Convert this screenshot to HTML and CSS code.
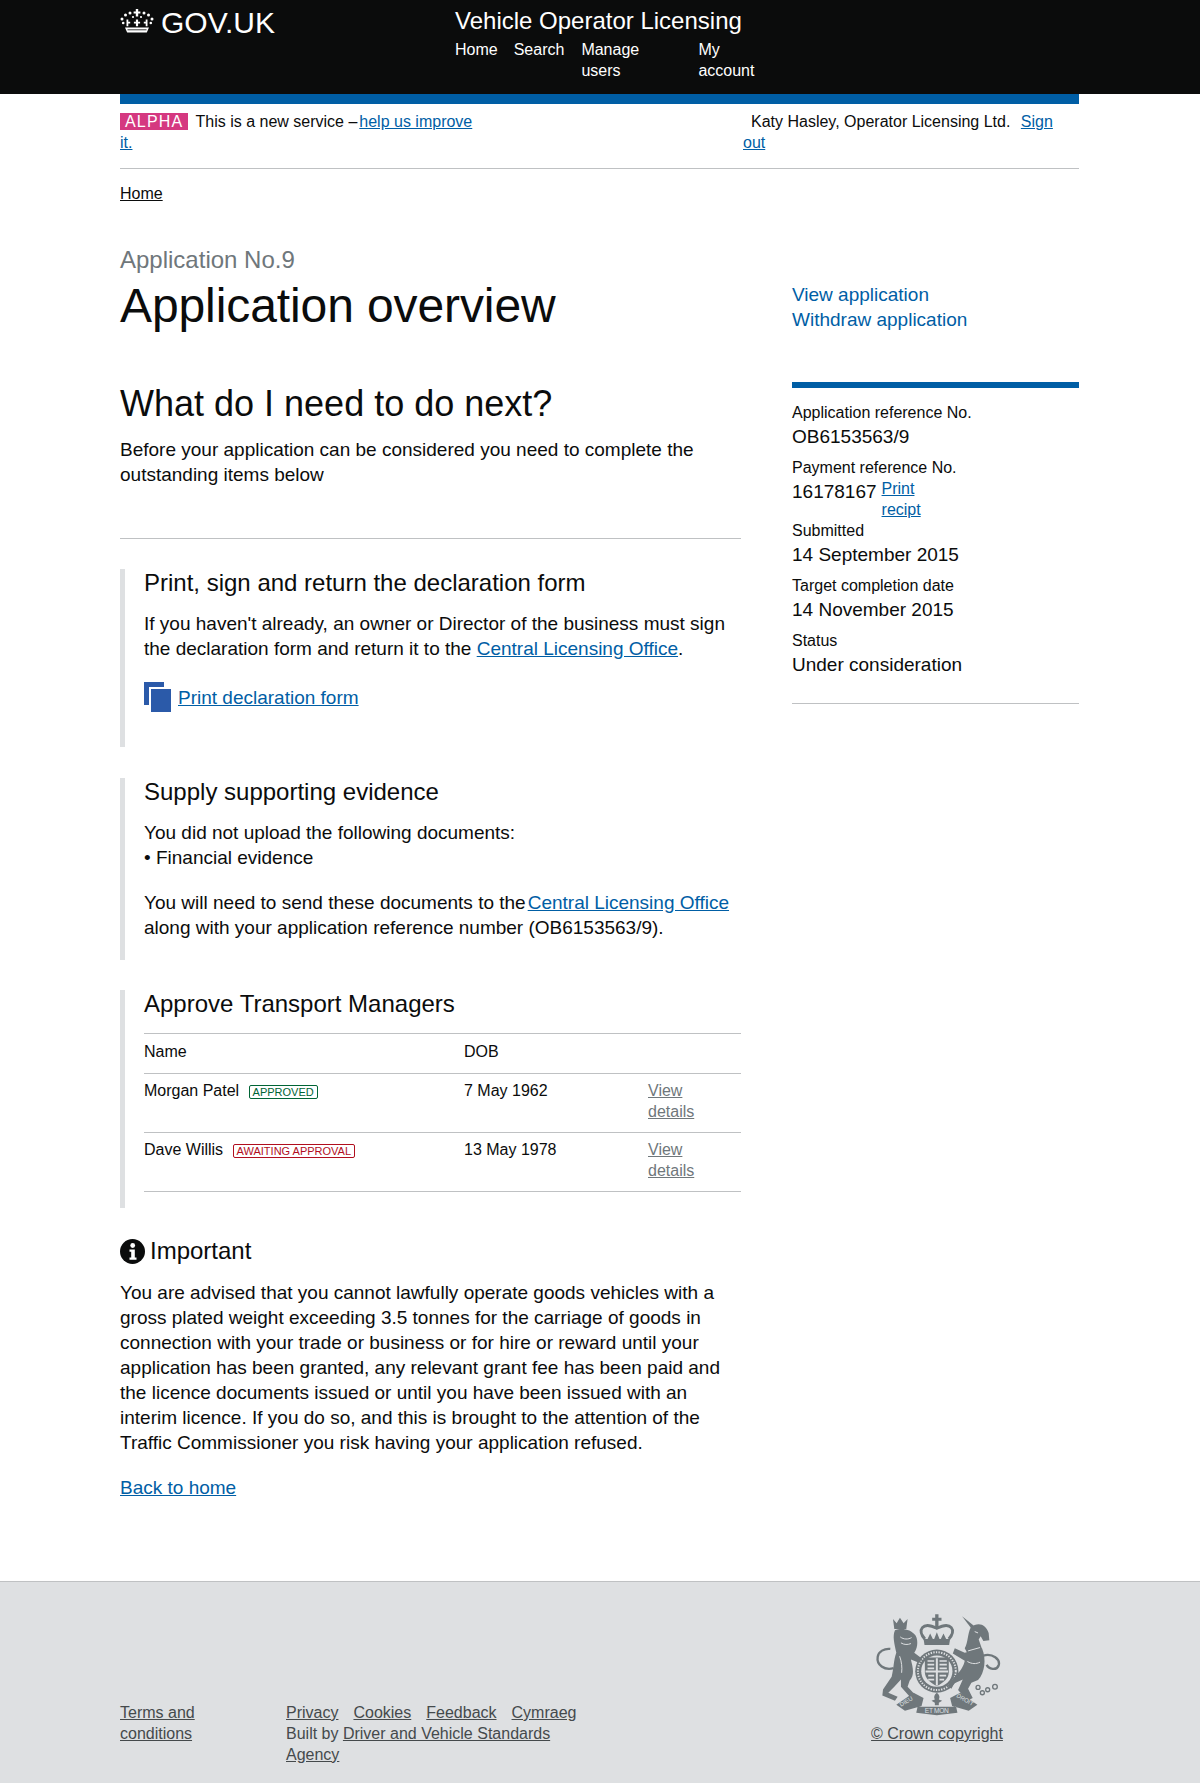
FILE: index.html
```html
<!DOCTYPE html>
<html lang="en">
<head>
    <meta charset="UTF-8">
    <meta name="viewport" content="width=device-width, initial-scale=1.0">
    <title>Application overview</title>
    <link rel="stylesheet" href="styles.css">
</head>
<body>
    <header class="site-header">
        <div class="header-inner">
            <a class="logo" href="#">
                <svg class="logo-crown" viewBox="0 0 34 26" aria-hidden="true">
                    <g fill="#fff">
                        <path d="M15.800 1h2.400v2.400h2.200v2.200h-2.200v3h-2.400v-3h-2.200V3.400h2.200z"/>
                        <circle cx="10" cy="5" r="1.500"/><circle cx="24" cy="5" r="1.500"/>
                        <circle cx="5.500" cy="7" r="1.500"/><circle cx="28.500" cy="7" r="1.500"/>
                        <circle cx="2" cy="11" r="1.500"/><circle cx="32" cy="11" r="1.500"/>
                        <circle cx="13" cy="9" r="1.100"/><circle cx="21" cy="9" r="1.100"/>
                        <circle cx="3.200" cy="15" r="1.300"/><circle cx="30.800" cy="15" r="1.300"/>
                        <path d="M6.500 11.500h1.800v2.200h1.900v1.700H8.300v2.800H6.500zM15.900 11.500h2.200v2.200h2v1.700h-2v2.800h-2.200v-2.800h-2v-1.700h2zM25.700 11.500h1.800v6.700h-1.800v-2.800h-1.900v-1.700h1.900z"/>
                        <path d="M5 19.500h24l-2.200 5H7.200z"/>
                    </g>
                    <path d="M7.500 21.800h19" stroke="#0b0c0c" stroke-width=".8"/>
                </svg>
                <span>GOV.UK</span>
            </a>
            <div class="service">
                <div class="service-name">Vehicle Operator Licensing</div>
                <nav class="main-nav">
                    <a href="#">Home</a>
                    <a href="#">Search</a>
                    <a class="nav-wide" href="#">Manage users</a>
                    <a class="nav-narrow" href="#">My account</a>
                </nav>
            </div>
        </div>
    </header>

    <div class="wrapper">
        <div class="blue-bar"></div>
        <div class="phase-row">
            <p class="phase-text"><strong class="phase-tag">ALPHA</strong>This is a new service –<a class="tight-link" href="#">help us improve it.</a></p>
            <p class="user-text">Katy Hasley, Operator Licensing Ltd. <a class="sign-out" href="#">Sign out</a></p>
        </div>
        <div class="breadcrumbs"><a href="#">Home</a></div>

        <main class="columns">
            <div class="main-col">
                <div class="page-title">
                    <div class="caption">Application No.9</div>
                    <h1>Application overview</h1>
                </div>
                <div class="next-steps">
                    <h2>What do I need to do next?</h2>
                    <p>Before your application can be considered you need to complete the outstanding items below</p>
                </div>

                <section class="task task-print">
                    <h3>Print, sign and return the declaration form</h3>
                    <p>If you haven't already, an owner or Director of the business must sign the declaration form and return it to the <a href="#">Central Licensing Office</a>.</p>
                    <div class="print-link">
                        <svg class="print-icon" viewBox="0 0 27 30" aria-hidden="true">
                            <path fill="#2b5aa9" d="M0 0h20v5H5v18H0z"/>
                            <path fill="#2b5aa9" d="M7 7h20v23H7z"/>
                        </svg>
                        <a href="#">Print declaration form</a>
                    </div>
                </section>

                <section class="task task-evidence">
                    <h3>Supply supporting evidence</h3>
                    <p>You did not upload the following documents:<br>• Financial evidence</p>
                    <p>You will need to send these documents to the<a class="tight-link" href="#">Central Licensing Office</a> along with your application reference number (OB6153563/9).</p>
                </section>

                <section class="task task-managers">
                    <h3>Approve Transport Managers</h3>
                    <table class="managers">
                        <thead>
                            <tr><th class="col-name">Name</th><th class="col-dob">DOB</th><th></th></tr>
                        </thead>
                        <tbody>
                            <tr>
                                <td>Morgan Patel <span class="status status-green">APPROVED</span></td>
                                <td>7 May 1962</td>
                                <td class="col-link"><a href="#">View details</a></td>
                            </tr>
                            <tr>
                                <td>Dave Willis <span class="status status-red">AWAITING APPROVAL</span></td>
                                <td>13 May 1978</td>
                                <td class="col-link"><a href="#">View details</a></td>
                            </tr>
                        </tbody>
                    </table>
                </section>

                <section class="important">
                    <h3>
                        <svg class="info-icon" viewBox="0 0 25 25" aria-hidden="true">
                            <circle cx="12.500" cy="12.500" r="12.500" fill="#0b0c0c"/>
                            <circle cx="12.700" cy="6.500" r="2.400" fill="#fff"/>
                            <path fill="#fff" d="M9.500 10.500h5.300v8h1.700v2.200H9.500v-2.200h1.700v-5.800H9.500z"/>
                        </svg>
                        Important
                    </h3>
                    <p>You are advised that you cannot lawfully operate goods vehicles with a gross plated weight exceeding 3.5 tonnes for the carriage of goods in connection with your trade or business or for hire or reward until your application has been granted, any relevant grant fee has been paid and the licence documents issued or until you have been issued with an interim licence. If you do so, and this is brought to the attention of the Traffic Commissioner you risk having your application refused.</p>
                </section>
                <p class="back-link"><a href="#">Back to home</a></p>
            </div>

            <aside class="side-col">
                <ul class="side-actions">
                    <li><a href="#">View application</a></li>
                    <li><a href="#">Withdraw application</a></li>
                </ul>
                <div class="summary">
                    <div class="summary-item">
                        <div class="summary-label">Application reference No.</div>
                        <div class="summary-value">OB6153563/9</div>
                    </div>
                    <div class="summary-item">
                        <div class="summary-label">Payment reference No.</div>
                        <div class="summary-pay">
                            <span class="summary-value">16178167</span>
                            <a class="recipt" href="#">Print recipt</a>
                        </div>
                    </div>
                    <div class="summary-item summary-tight">
                        <div class="summary-label">Submitted</div>
                        <div class="summary-value">14 September 2015</div>
                    </div>
                    <div class="summary-item">
                        <div class="summary-label">Target completion date</div>
                        <div class="summary-value">14 November 2015</div>
                    </div>
                    <div class="summary-item">
                        <div class="summary-label">Status</div>
                        <div class="summary-value">Under consideration</div>
                    </div>
                </div>
            </aside>
        </main>
    </div>

    <footer class="site-footer">
        <div class="footer-inner">
            <div class="footer-terms"><a href="#">Terms and conditions</a></div>
            <div class="footer-links">
                <div class="footer-nav">
                    <a href="#">Privacy</a>
                    <a href="#">Cookies</a>
                    <a href="#">Feedback</a>
                    <a href="#">Cymraeg</a>
                </div>
                <div>Built by <a href="#">Driver and Vehicle Standards Agency</a></div>
            </div>
            <div class="footer-crest">
                <svg class="crest" viewBox="70 40 380 310" aria-hidden="true">
                    <g fill="#6f777b">
                        <!-- crown -->
                        <path d="M253 44h10v10h9v9h-9v20h-10V63h-9v-9h9z"/>
                        <path d="M222 118C198 92 214 64 258 86c44-22 60 6 36 32" fill="none" stroke="#6f777b" stroke-width="9"/>
                        <path d="M230 118l8-16 8 16zM250 118l8-20 8 20zM270 118l8-16 8 16z"/>
                        <path d="M218 118h80l-3 18h-74z"/>
                        <!-- garter and shield -->
                        <circle cx="258" cy="215" r="65"/>
                        <circle cx="258" cy="215" r="57" fill="none" stroke="#dee0e2" stroke-width="6" stroke-dasharray="4 4"/>
                        <circle cx="258" cy="215" r="47" fill="#dee0e2"/>
                        <path d="M222 174h72v44c0 20-18 32-36 42-18-10-36-22-36-42z"/>
                        <path fill="#dee0e2" d="M255 176h6v82h-6zM224 213h68v6h-68z"/>
                        <path fill="#dee0e2" d="M230 182h20v5h-20zM230 193h20v5h-20zM230 204h20v5h-20zM266 182h22v5h-22zM266 193h22v5h-22zM266 204h22v5h-22zM232 226h18v5h-18zM232 238h18v5h-18zM266 226h20v5h-20zM266 238h14v5h-14z"/>
                        <!-- lion -->
                        <path d="M126 58l11 13 10-17 11 17 12-13-4 30h-36z"/>
                        <path d="M132 92c18-8 48-4 62 16 10 18 4 42-4 52l24 18-10 12-24-10c6 26 12 46-4 64l-6 18 26 28-16 6-30-34v-22l-20 22-18 18 28 12-8 12-38-16 2-18 26-38c6-22 6-52 14-72-6-30-12-50-4-68z"/>
                        <path d="M128 206c-28 8-52-10-48-34 2-16 20-26 38-24" fill="none" stroke="#6f777b" stroke-width="7"/>
                        <!-- unicorn -->
                        <path d="M334 50l42 34-10 8z"/>
                        <path d="M360 84c20-18 45-12 54 16l2 22-18 2-8-14-6 10 10 28-44 14-8-16c10-16 8-42 18-62z"/>
                        <path d="M342 160l52-14c14 34 8 74-12 96l-20 8-10 18 14 28-16 8-28-32 14-32-26 12-8 16-12-8 26-34c14-10 24-30 26-42l-36-22 6-16z"/>
                        <path d="M398 168c28-8 52 12 46 30-6 16-30 12-36-2" fill="none" stroke="#6f777b" stroke-width="7"/>
                        <g fill="none" stroke="#6f777b" stroke-width="4">
                            <circle cx="382" cy="264" r="6"/><circle cx="395" cy="280" r="6"/><circle cx="411" cy="271" r="6"/><circle cx="433" cy="262" r="7"/>
                        </g>
                        <!-- fleur and motto -->
                        <path d="M258 280c8 6 10 14 6 20l10 4-10 6v8h-12v-8l-10-6 10-4c-4-6-2-14 6-20z"/>
                        <path d="M136 316l52-36 30 16-6 24-50 14zM380 316l-52-36-30 16 6 24 50 14zM200 322h116l4 18-62 8-62-8z"/>
                    </g>
                    <g fill="none" stroke="#dee0e2" stroke-width="3">
                        <path d="M148 112c10 8 24 8 34 2M150 130c10 6 20 6 30 2M146 170c6 16 8 34 6 50"/>
                        <path d="M352 154l36-10M350 186c14 8 26 8 38 2M372 96l10 4"/>
                    </g>
                    <g fill="#dee0e2" font-family="'Liberation Sans', Arial, sans-serif">
                        <text x="222" y="341" font-size="20" textLength="72">ET MON</text>
                        <text x="150" y="322" font-size="18" transform="rotate(-30 150 322)">DIEU</text>
                        <text x="316" y="292" font-size="18" transform="rotate(30 316 292)">DROIT</text>
                    </g>
                </svg>
                <a href="#">© Crown copyright</a>
            </div>
        </div>
    </footer>
</body>
</html>
```

FILE: styles.css
```css
body {
    font-family: "Liberation Sans", Arial, sans-serif;
    color: #0b0c0c;
    background-color: #fff;
    margin: 0;
}
a {
    color: #005ea5;
}
p {
    margin: 0;
}
.tight-link {
    margin-left: 2px;
}

/* header */
.site-header {
    background-color: #0b0c0c;
    height: 94px;
}
.header-inner {
    display: flex;
    margin: 0 121px 0 120px;
}
.logo {
    display: flex;
    align-items: flex-start;
    width: 335px;
    padding-top: 7px;
    color: #fff;
    font-size: 30px;
    line-height: 32px;
    text-decoration: none;
}
.logo-crown {
    width: 34px;
    height: 26px;
    margin: 1px 7px 0 0;
}
.service {
    color: #fff;
}
.service-name {
    font-size: 24px;
    line-height: 30px;
    padding-top: 6px;
}
.main-nav {
    display: flex;
    align-items: flex-start;
    gap: 16px;
    margin-top: 3px;
}
.main-nav a {
    color: #fff;
    font-size: 16px;
    line-height: 21px;
    text-decoration: none;
}
.nav-wide {
    width: 64px;
    margin: 0 37px 0 1px;
}
.nav-narrow {
    width: 60px;
}

/* top of page */
.wrapper {
    margin: 0 121px 0 120px;
}
.blue-bar {
    height: 10px;
    background-color: #005ea5;
}
.phase-row {
    display: flex;
    justify-content: space-between;
    padding: 7px 0 15px;
    border-bottom: 1px solid #bfc1c3;
    font-size: 16px;
    line-height: 21px;
}
.phase-text {
    width: 360px;
}
.phase-tag {
    display: inline-block;
    margin-right: 7px;
    padding: 0 5px;
    background-color: #d53880;
    color: #fff;
    font-weight: normal;
    letter-spacing: 1.2px;
    line-height: 17px;
}
.user-text {
    width: 336px;
    box-sizing: border-box;
    padding-right: 4px;
    text-indent: 8px;
}
.sign-out {
    margin-left: 6px;
}
.breadcrumbs {
    padding-top: 14px;
    font-size: 16px;
    line-height: 21px;
}
.breadcrumbs a {
    color: #0b0c0c;
}

/* columns */
.columns {
    display: flex;
    justify-content: space-between;
}
.main-col {
    width: 621px;
}
.side-col {
    width: 287px;
}

.page-title {
    padding-top: 41px;
}
.caption {
    margin-bottom: 1px;
    color: #6f777b;
    font-size: 24px;
    line-height: 30px;
}
h1 {
    margin: 0;
    font-size: 48px;
    font-weight: normal;
    letter-spacing: -0.1px;
    line-height: 60px;
}
.next-steps {
    padding: 45px 0 51px;
    border-bottom: 1px solid #bfc1c3;
}
h2 {
    margin: 0 0 11px;
    font-size: 36px;
    font-weight: normal;
    line-height: 45px;
}
.next-steps p,
.task p,
.important p {
    font-size: 19px;
    line-height: 25px;
}

.task {
    margin-top: 30px;
    padding-left: 19px;
    border-left: 5px solid #dee0e2;
}
h3 {
    margin: 0;
    font-size: 24px;
    font-weight: normal;
    line-height: 28px;
}
.task h3 {
    margin-bottom: 14px;
}
.task p + p {
    margin-top: 20px;
}
.task-print {
    padding-bottom: 35px;
}
.print-link {
    display: flex;
    align-items: center;
    margin-top: 21px;
    font-size: 19px;
    line-height: 25px;
}
.print-icon {
    width: 27px;
    height: 30px;
    margin-right: 7px;
}
.task-evidence {
    margin-top: 31px;
    padding-bottom: 20px;
}
.task-managers {
    padding-bottom: 16px;
}
.task-managers h3 {
    margin-bottom: 15px;
}

/* transport managers */
.managers {
    width: 100%;
    border-collapse: collapse;
    border-top: 1px solid #bfc1c3;
    table-layout: fixed;
    font-size: 16px;
    line-height: 21px;
}
.managers th,
.managers td {
    padding: 6px 0 10px;
    border-bottom: 1px solid #bfc1c3;
    font-weight: normal;
    text-align: left;
    vertical-align: top;
}
.managers th {
    padding: 7px 0 11px;
}
.col-name {
    width: 320px;
}
.col-dob {
    width: 184px;
}
.managers .col-link {
    padding-right: 20px;
}
.col-link a {
    color: #6f777b;
}
.status {
    display: inline-block;
    margin-left: 5px;
    padding: 0 3px;
    border: 1px solid;
    border-radius: 2px;
    font-size: 11px;
    line-height: 12px;
    vertical-align: 0;
}
.status-green {
    color: #006435;
}
.status-red {
    color: #b10e1e;
}

/* important */
.important {
    margin-top: 29px;
}
.important h3 {
    display: flex;
    align-items: center;
    gap: 5px;
    margin-bottom: 15px;
}
.info-icon {
    width: 25px;
    height: 25px;
}
.back-link {
    margin-top: 20px;
    font-size: 19px;
    line-height: 25px;
}

/* sidebar */
.side-actions {
    margin: 0;
    padding: 78px 0 0;
    list-style: none;
    font-size: 19px;
    line-height: 25px;
}
.side-actions a {
    color: #005ea5;
    text-decoration: none;
}
.summary {
    margin-top: 50px;
    padding: 14px 0 24px;
    border-top: 6px solid #005ea5;
    border-bottom: 1px solid #bfc1c3;
}
.summary-item {
    margin-bottom: 6px;
}
.summary-tight {
    margin-top: -6px;
}
.summary-label {
    font-size: 16px;
    line-height: 21px;
}
.summary-value {
    font-size: 19px;
    line-height: 28px;
}
.summary-item:last-child {
    margin-bottom: 0;
}
.summary-pay {
    display: flex;
    align-items: flex-start;
    gap: 5px;
}
.recipt {
    width: 50px;
    font-size: 16px;
    line-height: 21px;
}

/* footer */
.site-footer {
    margin-top: 81px;
    height: 202px;
    box-sizing: border-box;
    border-top: 1px solid #bfc1c3;
    background-color: #dee0e2;
    color: #454a4c;
    font-size: 16px;
    line-height: 21px;
}
.site-footer a {
    color: #454a4c;
}
.footer-inner {
    display: flex;
    align-items: flex-end;
    height: 100%;
    box-sizing: border-box;
    margin: 0 121px 0 120px;
    padding-bottom: 18px;
}
.footer-terms {
    width: 100px;
    margin-right: 66px;
    padding-bottom: 21px;
}
.footer-links {
    width: 300px;
}
.footer-nav {
    display: flex;
    gap: 15px;
}
.footer-crest {
    display: flex;
    flex-direction: column;
    align-items: center;
    margin-left: 281px;
    padding-bottom: 21px;
    width: 140px;
}
.crest {
    width: 127px;
    height: 103px;
    margin-bottom: 7px;
}
```
